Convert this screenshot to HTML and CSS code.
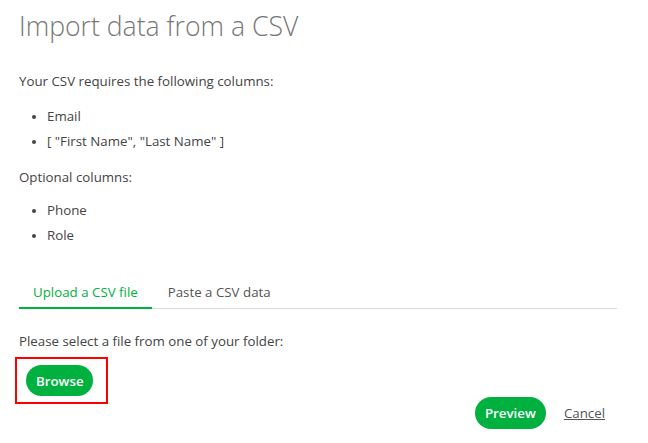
FILE: index.html
```html
<!DOCTYPE html>
<html>
<head>
<meta charset="utf-8">
<link rel="stylesheet" href="styles.css">
</head>
<body>
<div class="page">
  <h1 class="title">Import data from a CSV</h1>
  <p class="text req">Your CSV requires the following columns:</p>
  <ul class="cols">
    <li>Email</li>
    <li>[ "First Name", "Last Name" ]</li>
  </ul>
  <p class="text opt">Optional columns:</p>
  <ul class="cols cols-opt">
    <li>Phone</li>
    <li>Role</li>
  </ul>
  <div class="tabs">
    <div class="tab active">Upload a CSV file</div>
    <div class="tab">Paste a CSV data</div>
  </div>
  <p class="text select">Please select a file from one of your folder:</p>
  <div class="browse-row">
    <span class="highlight"><button class="btn browse">Browse</button></span>
  </div>
  <div class="footer">
    <button class="btn preview">Preview</button>
    <a class="cancel" href="#">Cancel</a>
  </div>
</div>
</body>
</html>
```

FILE: styles.css
```css
html, body {
  margin: 0;
  padding: 0;
  background: #fff;
}
body {
  font-family: "Open Sans", "Noto Sans", sans-serif;
  color: #444;
  font-size: 13.3px;
}
.page {
  width: 598px;
  padding-left: 19px;
}
.title {
  margin: 10px 0 0;
  font-size: 26.6px;
  line-height: 32px;
  font-weight: 300;
  color: #777;
}
.text {
  margin: 0;
  line-height: 20px;
}
.req { margin-top: 29px; }
.opt { margin-top: 13px; }
.select { margin-top: 22px; }
.cols {
  margin: 13px 0 0;
  padding-left: 28px;
  line-height: 25px;
}
.cols li::marker {
  font-size: 11px;
}
.cols-opt { margin-top: 11px; }
.tabs {
  margin-top: 34px;
  display: flex;
  gap: 2px;
  border-bottom: 1px solid #ddd;
}
.tab {
  padding: 0 14px 5px;
  line-height: 20px;
  color: #555;
}
.tab.active {
  color: #00b140;
  border-bottom: 2px solid #00b140;
  margin-bottom: -1px;
}
.browse-row {
  margin-top: 14px;
  padding-left: 7px;
  display: flex;
}
.highlight {
  position: relative;
  display: inline-flex;
}
.highlight::after {
  content: "";
  position: absolute;
  top: -8px;
  bottom: -8px;
  left: -11px;
  right: -15px;
  border: 2px solid #f00;
}
.btn {
  border: none;
  border-radius: 16px;
  background: #00b140;
  color: #fff;
  font-family: inherit;
  font-size: 13.3px;
  font-weight: 600;
  height: 32px;
  padding: 0 10px;
  cursor: pointer;
}
.browse { width: 67px; height: 31px; }
.preview { width: 71px; }
.footer {
  margin-top: 1px;
  display: flex;
  justify-content: flex-end;
  align-items: center;
  padding-right: 12px;
  gap: 18px;
}
.cancel {
  color: #555;
  text-decoration: underline;
  font-size: 13.3px;
}
```
